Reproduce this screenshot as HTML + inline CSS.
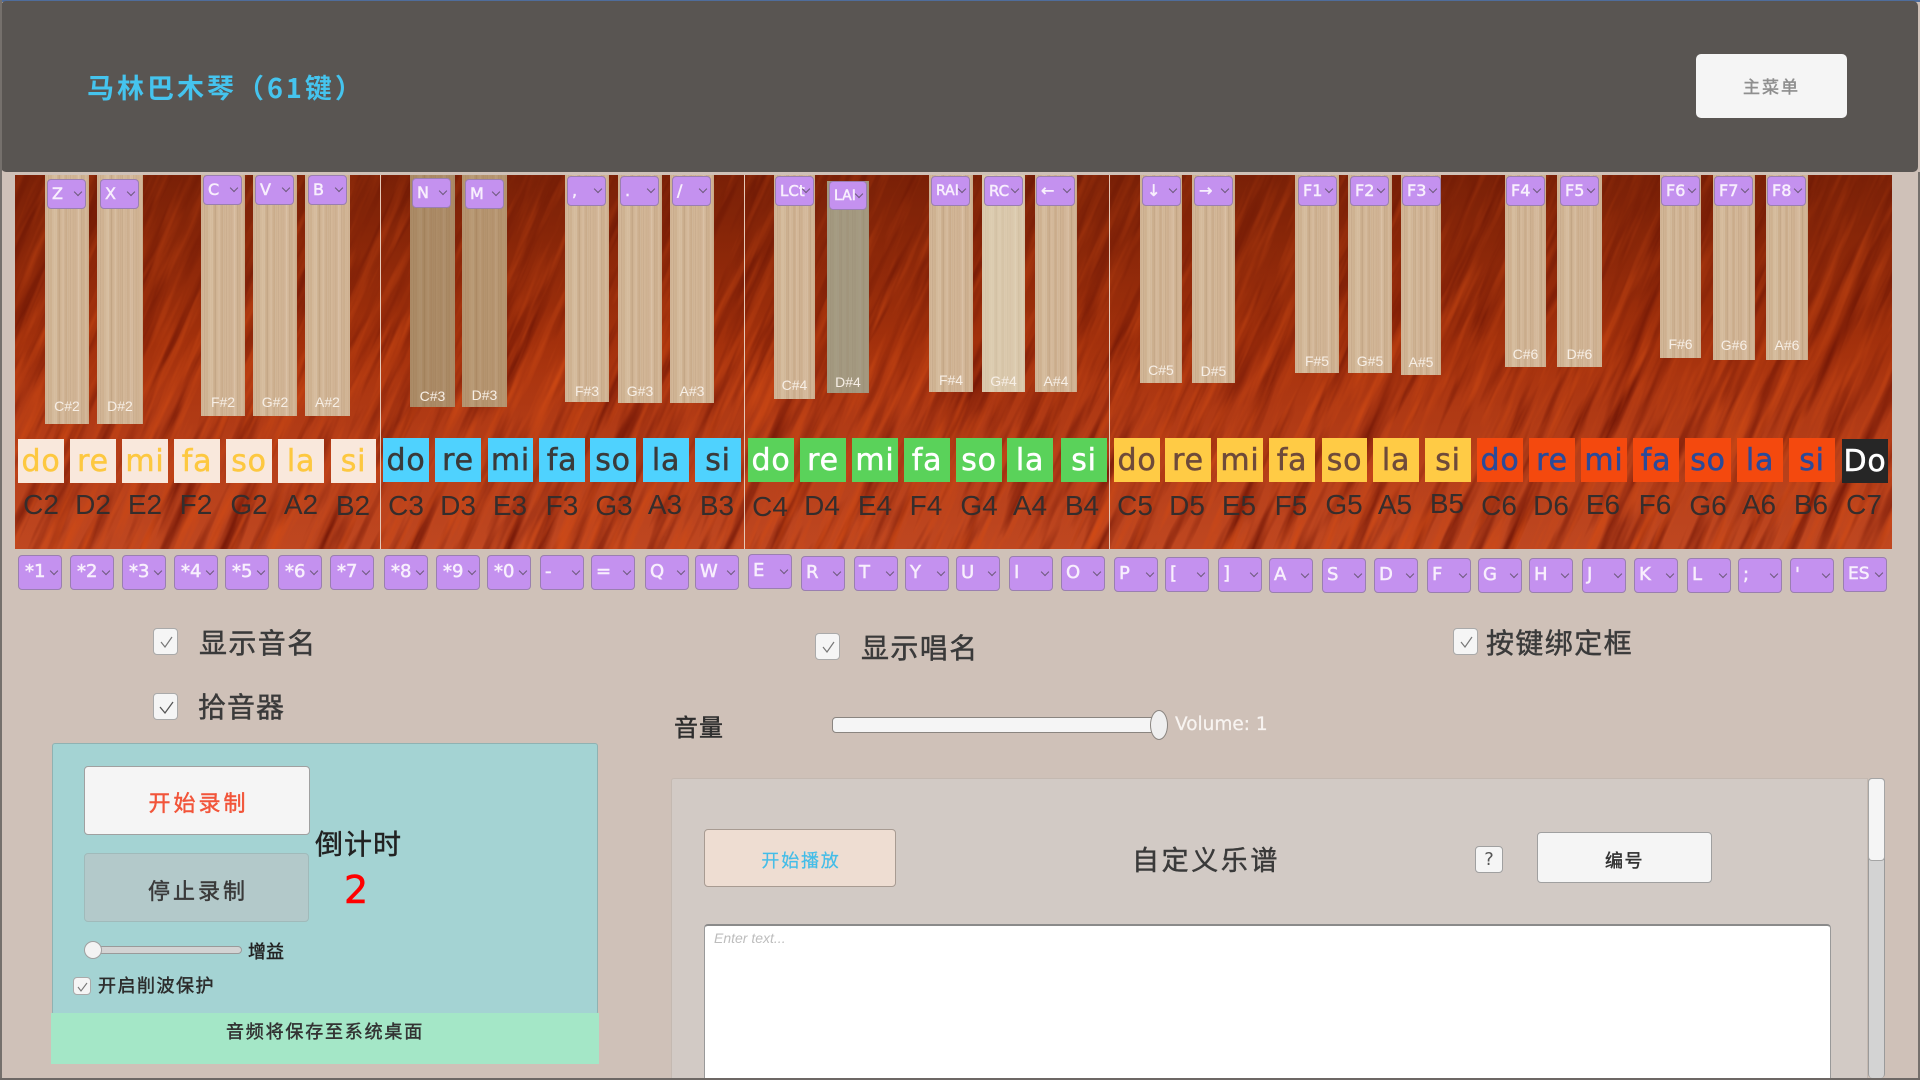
<!DOCTYPE html>
<html lang="zh"><head><meta charset="utf-8"><title>马林巴木琴</title>
<style>
html,body{margin:0;padding:0;width:1920px;height:1080px;overflow:hidden;background:#cfc1b8}
body{position:relative;font-family:"Liberation Sans","Noto Sans CJK SC",sans-serif}
div,span,b,i,u{position:absolute;display:block;box-sizing:border-box;font-style:normal;font-weight:normal;text-decoration:none;white-space:nowrap}
.cj{font-family:"Noto Sans CJK SC",sans-serif;color:#3a3a3a;line-height:1;-webkit-text-stroke:.45px currentColor}
.t{top:175px;background:linear-gradient(90deg,#c8a988 0,#d4b899 6%,#cdb08f 14%,#d8bfa1 22%,#caad8c 31%,#d6bb9d 40%,#c9ab8a 49%,#d5b99a 58%,#ccae8e 67%,#d7bc9f 77%,#cbad8c 87%,#d3b697 94%,#c7a887 100%)}
.t:before{content:"";position:absolute;left:0;top:0;right:0;bottom:0;background:repeating-linear-gradient(90deg,rgba(255,255,255,.09) 0 1px,transparent 1px 3px,rgba(90,60,30,.08) 3px 4px,transparent 4px 7px,rgba(255,255,255,.05) 7px 8px,transparent 8px 11px)}
.t u{left:0;top:0;right:0;bottom:0}
.t i{left:0;right:0;text-align:center;font-size:14px;line-height:16px;color:#f7efe6}
.d{width:39px;height:30px;top:176px;background:#c491ef;border:1px solid #9a7fb0;border-radius:4px;color:#f8effd;font:16px/28px "DejaVu Sans",sans-serif;padding-left:4px;-webkit-text-stroke:.5px #f8effd}
.d:after{content:"";position:absolute;right:4px;top:50%;margin-top:-5px;width:5px;height:5px;border-right:1px solid #6d5a7c;border-bottom:1px solid #6d5a7c;transform:rotate(45deg)}
.k{width:44px;height:35px;top:558px;font-size:18px;line-height:32px}
.s{width:46px;height:44px;top:438px;text-align:center;font:30px/46px "DejaVu Sans",sans-serif;letter-spacing:.8px;-webkit-text-stroke:.5px currentColor}
.a{background:#f9e8dc;color:#fdc840;top:439px}.b{background:#4fd2fe;color:#3a3a3a}.c{background:#5ad25a;color:#fff}.e{background:#ffcb45;color:#6e4a3a}.f{background:#f4490e;color:#2a4a9a}
.n{width:60px;top:489px;text-align:center;font-size:28px;line-height:32px;color:#352d2c}
.cb{width:25px;height:27px;background:#f5f5f5;border:1px solid #aaa;border-radius:4px}
.cb svg{position:absolute;left:0;top:0}
.btn{background:#f5f5f5;border:1px solid #a0a0a0;border-radius:4px;text-align:center}
.v{width:1px;top:175px;height:374px;background:#e6c9b8}
</style></head><body>
<div style="left:15px;top:175px;width:1877px;height:374px;overflow:hidden">
<svg style="position:absolute;left:0;top:0" width="1877" height="374">
<defs>
<linearGradient id="g" x1="0" y1="0" x2="0" y2="1"><stop offset="0" stop-color="#8e280a"/><stop offset=".45" stop-color="#ad340d"/><stop offset=".75" stop-color="#b9401a"/><stop offset="1" stop-color="#bf4720"/></linearGradient>
<linearGradient id="o" x1="0" y1="0" x2="0" y2="1"><stop offset="0" stop-color="#6a1a04" stop-opacity=".55"/><stop offset=".55" stop-color="#7a2206" stop-opacity=".1"/><stop offset="1" stop-color="#7a2206" stop-opacity="0"/></linearGradient>
<filter id="n1" filterUnits="userSpaceOnUse" x="-300" y="-700" width="2500" height="1800" color-interpolation-filters="sRGB"><feTurbulence type="fractalNoise" baseFrequency=".1 .009" numOctaves="3" seed="7"/><feColorMatrix type="matrix" values="0 0 0 0 .82  0 0 0 0 .29  0 0 0 0 .08  2.2 0 0 0 -1.05"/></filter>
<filter id="n2" filterUnits="userSpaceOnUse" x="-300" y="-700" width="2500" height="1800" color-interpolation-filters="sRGB"><feTurbulence type="fractalNoise" baseFrequency=".07 .007" numOctaves="3" seed="21"/><feColorMatrix type="matrix" values="0 0 0 0 .44  0 0 0 0 .08  0 0 0 0 .02  2.2 0 0 0 -1"/></filter>
</defs>
<rect width="1877" height="374" fill="url(#g)"/>
<g transform="rotate(24 938 187)"><rect x="938" y="187" width="1" height="1" filter="url(#n2)"/><rect x="938" y="187" width="1" height="1" filter="url(#n1)"/></g>
<rect width="1877" height="374" fill="url(#o)"/>
</svg></div>
<div class="v" style="left:380px"></div><div class="v" style="left:744px"></div><div class="v" style="left:1109px"></div>

<div style="left:0;top:0;width:1920px;height:2px;background:#4f6d9c"></div>
<div style="left:1px;top:1px;width:1917px;height:171px;background:#595552;border-radius:5px"></div>
<div style="left:0;top:0;width:2px;height:1080px;background:#75706c"></div>
<div style="left:1918px;top:172px;width:2px;height:908px;background:#75706c"></div>
<div style="left:0;top:1078px;width:1920px;height:2px;background:#6d6865"></div>
<div class="cj" style="left:87px;top:73px;font-size:27px;letter-spacing:3px;color:#45c4ee;font-weight:bold;-webkit-text-stroke:0">马林巴木琴（61键）</div>
<div class="btn cj" style="left:1696px;top:54px;width:151px;height:64px;border:0;color:#8f8f8f;font-size:17px;letter-spacing:2px;line-height:64px;border-radius:5px">主菜单</div>

<div class="t" style="left:45px;width:44px;height:249px"><i style="bottom:10px">C#2</i></div>
<div class="t" style="left:97px;width:46px;height:249px"><i style="bottom:10px">D#2</i></div>
<div class="t" style="left:201px;width:44px;height:241px"><i style="bottom:6px">F#2</i></div>
<div class="t" style="left:253px;width:44px;height:241px"><i style="bottom:6px">G#2</i></div>
<div class="t" style="left:305px;width:45px;height:241px"><i style="bottom:6px">A#2</i></div>
<div class="t" style="left:410px;width:45px;height:232px"><u style="background:rgba(110,70,25,.38)"></u><i style="bottom:3px">C#3</i></div>
<div class="t" style="left:462px;width:45px;height:232px"><u style="background:rgba(120,75,25,.3)"></u><i style="bottom:4px">D#3</i></div>
<div class="t" style="left:565px;width:44px;height:227px"><i style="bottom:3px">F#3</i></div>
<div class="t" style="left:618px;width:44px;height:228px"><i style="bottom:4px">G#3</i></div>
<div class="t" style="left:670px;width:44px;height:228px"><i style="bottom:4px">A#3</i></div>
<div class="t" style="left:774px;width:41px;height:224px"><i style="bottom:6px">C#4</i></div>
<div class="t" style="left:827px;top:181px;width:42px;height:212px"><u style="background:rgba(135,135,115,.62)"></u><i style="bottom:3px">D#4</i></div>
<div class="t" style="left:929px;width:44px;height:217px"><i style="bottom:4px">F#4</i></div>
<div class="t" style="left:982px;width:43px;height:217px"><u style="background:rgba(232,228,205,.42)"></u><i style="bottom:3px">G#4</i></div>
<div class="t" style="left:1035px;width:42px;height:217px"><i style="bottom:3px">A#4</i></div>
<div class="t" style="left:1140px;width:42px;height:208px"><i style="bottom:5px">C#5</i></div>
<div class="t" style="left:1192px;width:43px;height:208px"><i style="bottom:4px">D#5</i></div>
<div class="t" style="left:1295px;width:44px;height:198px"><i style="bottom:4px">F#5</i></div>
<div class="t" style="left:1348px;width:44px;height:198px"><i style="bottom:4px">G#5</i></div>
<div class="t" style="left:1401px;width:40px;height:200px"><i style="bottom:5px">A#5</i></div>
<div class="t" style="left:1505px;width:41px;height:192px"><i style="bottom:5px">C#6</i></div>
<div class="t" style="left:1557px;width:45px;height:192px"><i style="bottom:5px">D#6</i></div>
<div class="t" style="left:1660px;width:41px;height:183px"><i style="bottom:6px">F#6</i></div>
<div class="t" style="left:1713px;width:42px;height:185px"><i style="bottom:7px">G#6</i></div>
<div class="t" style="left:1766px;width:42px;height:185px"><i style="bottom:7px">A#6</i></div>

<div class="d" style="left:47px;top:179px">Z</div>
<div class="d" style="left:100px;top:179px">X</div>
<div class="d" style="left:203px;top:175px">C</div>
<div class="d" style="left:255px;top:175px">V</div>
<div class="d" style="left:308px;top:175px">B</div>
<div class="d" style="left:412px;top:178px">N</div>
<div class="d" style="left:465px;top:179px">M</div>
<div class="d" style="left:567px">,</div>
<div class="d" style="left:620px">.</div>
<div class="d" style="left:672px">/</div>
<div class="d" style="left:775px;font-size:15px">LCt</div>
<div class="d" style="left:829px;top:181px;width:38px;height:29px;font-size:14px">LAI</div>
<div class="d" style="left:931px;font-size:14px">RAI</div>
<div class="d" style="left:984px;font-size:15px">RC</div>
<div class="d" style="left:1036px">←</div>
<div class="d" style="left:1142px">↓</div>
<div class="d" style="left:1194px">→</div>
<div class="d" style="left:1298px">F1</div>
<div class="d" style="left:1350px">F2</div>
<div class="d" style="left:1402px">F3</div>
<div class="d" style="left:1506px">F4</div>
<div class="d" style="left:1560px">F5</div>
<div class="d" style="left:1661px">F6</div>
<div class="d" style="left:1714px">F7</div>
<div class="d" style="left:1767px">F8</div>

<div class="s a" style="left:18px">do</div><div class="s a" style="left:70px">re</div><div class="s a" style="left:122px">mi</div><div class="s a" style="left:174px">fa</div><div class="s a" style="left:226px">so</div><div class="s a" style="left:278px">la</div><div class="s a" style="left:331px;width:45px">si</div>
<div class="s b" style="left:383px">do</div><div class="s b" style="left:435px">re</div><div class="s b" style="left:488px;width:45px">mi</div><div class="s b" style="left:539px">fa</div><div class="s b" style="left:590px">so</div><div class="s b" style="left:643px">la</div><div class="s b" style="left:695px">si</div>
<div class="s c" style="left:748px">do</div><div class="s c" style="left:800px">re</div><div class="s c" style="left:852px">mi</div><div class="s c" style="left:904px">fa</div><div class="s c" style="left:956px">so</div><div class="s c" style="left:1007px">la</div><div class="s c" style="left:1061px">si</div>
<div class="s e" style="left:1114px">do</div><div class="s e" style="left:1165px">re</div><div class="s e" style="left:1217px">mi</div><div class="s e" style="left:1269px">fa</div><div class="s e" style="left:1322px;width:45px">so</div><div class="s e" style="left:1373px">la</div><div class="s e" style="left:1425px">si</div>
<div class="s f" style="left:1477px">do</div><div class="s f" style="left:1529px">re</div><div class="s f" style="left:1581px">mi</div><div class="s f" style="left:1633px">fa</div><div class="s f" style="left:1685px">so</div><div class="s f" style="left:1737px">la</div><div class="s f" style="left:1789px">si</div>
<div class="s" style="left:1842px;top:439px;background:#262626;color:#fff">Do</div>

<div class="n" style="left:11px">C2</div><div class="n" style="left:63px">D2</div><div class="n" style="left:115px">E2</div><div class="n" style="left:166px">F2</div><div class="n" style="left:219px">G2</div><div class="n" style="left:271px">A2</div><div class="n" style="left:323px;top:490px">B2</div>
<div class="n" style="left:376px;top:490px">C3</div><div class="n" style="left:428px;top:490px">D3</div><div class="n" style="left:480px;top:490px">E3</div><div class="n" style="left:532px;top:490px">F3</div><div class="n" style="left:584px;top:490px">G3</div><div class="n" style="left:635px;top:489px">A3</div><div class="n" style="left:687px;top:490px">B3</div>
<div class="n" style="left:740px;top:491px">C4</div><div class="n" style="left:792px;top:490px">D4</div><div class="n" style="left:845px;top:490px">E4</div><div class="n" style="left:896px;top:490px">F4</div><div class="n" style="left:949px;top:490px">G4</div><div class="n" style="left:1000px;top:490px">A4</div><div class="n" style="left:1052px;top:490px">B4</div>
<div class="n" style="left:1105px;top:490px">C5</div><div class="n" style="left:1157px;top:490px">D5</div><div class="n" style="left:1209px;top:490px">E5</div><div class="n" style="left:1261px;top:490px">F5</div><div class="n" style="left:1314px;top:489px">G5</div><div class="n" style="left:1365px;top:489px">A5</div><div class="n" style="left:1417px;top:488px">B5</div>
<div class="n" style="left:1469px;top:490px">C6</div><div class="n" style="left:1521px;top:490px">D6</div><div class="n" style="left:1573px;top:489px">E6</div><div class="n" style="left:1625px;top:489px">F6</div><div class="n" style="left:1678px;top:490px">G6</div><div class="n" style="left:1729px;top:489px">A6</div><div class="n" style="left:1781px;top:489px">B6</div><div class="n" style="left:1834px;top:489px">C7</div>

<div class="d k" style="left:18px;top:555px;padding-left:6px">*1</div><div class="d k" style="left:70px;top:555px;padding-left:6px">*2</div><div class="d k" style="left:122px;top:555px;padding-left:6px">*3</div><div class="d k" style="left:174px;top:555px;padding-left:6px">*4</div><div class="d k" style="left:225px;top:555px;padding-left:6px">*5</div><div class="d k" style="left:278px;top:555px;padding-left:6px">*6</div><div class="d k" style="left:330px;top:555px;padding-left:6px">*7</div><div class="d k" style="left:384px;top:555px;padding-left:6px">*8</div><div class="d k" style="left:436px;top:555px;padding-left:6px">*9</div><div class="d k" style="left:487px;top:555px;padding-left:6px">*0</div><div class="d k" style="left:540px;top:555px">-</div><div class="d k" style="left:591px;top:555px">=</div>
<div class="d k" style="left:645px;top:555px">Q</div><div class="d k" style="left:695px;top:555px">W</div><div class="d k" style="left:748px;top:554px">E</div><div class="d k" style="left:801px;top:556px">R</div><div class="d k" style="left:854px;top:556px">T</div><div class="d k" style="left:905px;top:556px">Y</div><div class="d k" style="left:956px;top:556px">U</div><div class="d k" style="left:1009px;top:556px">I</div><div class="d k" style="left:1061px;top:556px">O</div><div class="d k" style="left:1114px;top:557px">P</div><div class="d k" style="left:1165px;top:557px">[</div><div class="d k" style="left:1218px;top:557px">]</div>
<div class="d k" style="left:1269px">A</div><div class="d k" style="left:1322px">S</div><div class="d k" style="left:1374px">D</div><div class="d k" style="left:1427px">F</div><div class="d k" style="left:1478px">G</div><div class="d k" style="left:1529px">H</div><div class="d k" style="left:1582px">J</div><div class="d k" style="left:1634px">K</div><div class="d k" style="left:1687px">L</div><div class="d k" style="left:1738px">;</div><div class="d k" style="left:1790px">'</div><div class="d k" style="left:1843px;top:557px;font-size:17px">ES</div>

<div class="cb" style="left:153px;top:628px"><svg width="25" height="27"><path d="M7 13l4 5 7-10" fill="none" stroke="#777" stroke-width="1.2"/></svg></div>
<div class="cj" style="left:199px;top:628px;font-size:28px;letter-spacing:1.4px;line-height:28px">显示音名</div>
<div class="cb" style="left:153px;top:693px"><svg width="25" height="27"><path d="M6 13l5 6 8-11" fill="none" stroke="#555" stroke-width="1.3"/></svg></div>
<div class="cj" style="left:198px;top:692px;font-size:28px;letter-spacing:1px;line-height:28px">拾音器</div>
<div class="cb" style="left:815px;top:633px"><svg width="25" height="27"><path d="M7 13l4 5 7-10" fill="none" stroke="#777" stroke-width="1.2"/></svg></div>
<div class="cj" style="left:861px;top:633px;font-size:28px;letter-spacing:1.4px;line-height:28px">显示唱名</div>
<div class="cb" style="left:1453px;top:628px"><svg width="25" height="27"><path d="M7 13l4 5 7-10" fill="none" stroke="#777" stroke-width="1.2"/></svg></div>
<div class="cj" style="left:1486px;top:628px;font-size:28px;letter-spacing:1.4px;line-height:28px">按键绑定框</div>

<div class="cj" style="left:674px;top:713px;font-size:24px;letter-spacing:1px;line-height:26px;color:#2e2e2e">音量</div>
<div style="left:832px;top:717px;width:326px;height:16px;background:#f5f5f5;border:1px solid #8a8580;border-radius:4px"></div>
<div style="left:1150px;top:710px;width:18px;height:30px;background:#efefef;border:1px solid #8a8580;border-radius:50%"></div>
<div style="left:1175px;top:714px;font:18.5px/22px 'DejaVu Sans',sans-serif;color:#f8f4f1;-webkit-text-stroke:.25px #f8f4f1">Volume: 1</div>

<div style="left:52px;top:743px;width:546px;height:272px;background:#a4d3d3;border:1px solid #8fb2b2;border-radius:3px"></div>
<div class="btn cj" style="left:84px;top:766px;width:226px;height:69px;color:#f2553a;font-size:22px;letter-spacing:3px;line-height:71px;padding-left:3px">开始录制</div>
<div class="btn cj" style="left:84px;top:853px;width:225px;height:69px;background:#b3c9ca;border-color:#a0baba;font-size:22px;letter-spacing:3px;line-height:73px;padding-left:3px">停止录制</div>
<div class="cj" style="left:315px;top:829px;font-size:28px;letter-spacing:1px;line-height:28px;color:#222">倒计时</div>
<div style="left:344px;top:868px;font:38px/44px 'DejaVu Sans',sans-serif;color:#f00;-webkit-text-stroke:.6px #f00">2</div>
<div style="left:85px;top:946px;width:157px;height:8px;background:#d3d3d3;border:1px solid #9a9a9a;border-radius:4px"></div>
<div style="left:84px;top:941px;width:18px;height:18px;background:#f3f3f3;border:1px solid #a0a0a0;border-radius:50%"></div>
<div class="cj" style="left:248px;top:941px;font-size:18px;line-height:20px;color:#222">增益</div>
<div class="cb" style="left:73px;top:977px;width:18px;height:18px"><svg width="18" height="18"><path d="M4 9l3 4 6-8" fill="none" stroke="#777" stroke-width="1.1"/></svg></div>
<div class="cj" style="left:98px;top:975px;font-size:18px;letter-spacing:1.5px;line-height:20px;color:#2c2c2c">开启削波保护</div>
<div class="cj" style="left:51px;top:1013px;width:548px;height:51px;background:#a4e7c7;text-align:center;font-size:18px;letter-spacing:1.8px;line-height:37px;color:#333">音频将保存至系统桌面</div>

<div style="left:671px;top:778px;width:1197px;height:300px;background:#d2cac5;border:1px solid #c4b9b1;border-bottom:0;border-radius:3px 0 0 0"></div>
<div style="left:1868px;top:778px;width:17px;height:300px;background:#d3d3d3;border:1px solid #9a9a9a;border-bottom:0;border-radius:4px"></div>
<div style="left:1868px;top:778px;width:17px;height:83px;background:#f5f5f5;border:1px solid #a5a5a5;border-radius:4px"></div>
<div class="cj" style="left:704px;top:829px;width:192px;height:58px;background:#eeddd2;border:1px solid #a89b92;border-radius:4px;text-align:center;color:#43bde8;font-size:18px;letter-spacing:1.8px;line-height:60px;padding-left:2px;-webkit-text-stroke:.2px #43bde8">开始播放</div>
<div class="cj" style="left:1132px;top:845px;font-size:27px;letter-spacing:2.6px;line-height:28px">自定义乐谱</div>
<div class="btn" style="left:1475px;top:846px;width:28px;height:27px;font:18px/25px 'DejaVu Sans',sans-serif;color:#555">?</div>
<div class="btn cj" style="left:1537px;top:832px;width:175px;height:51px;font-size:18px;letter-spacing:1.5px;line-height:55px;color:#333">编号</div>
<div style="left:704px;top:924px;width:1127px;height:154px;background:#fff;border:1px solid #999;border-top:2px solid #8a8a8a;border-bottom:0;border-radius:4px 4px 0 0"></div>
<div style="left:714px;top:930px;font-size:14px;line-height:16px;font-style:italic;color:#bdbdbd">Enter text...</div>
</body></html>
